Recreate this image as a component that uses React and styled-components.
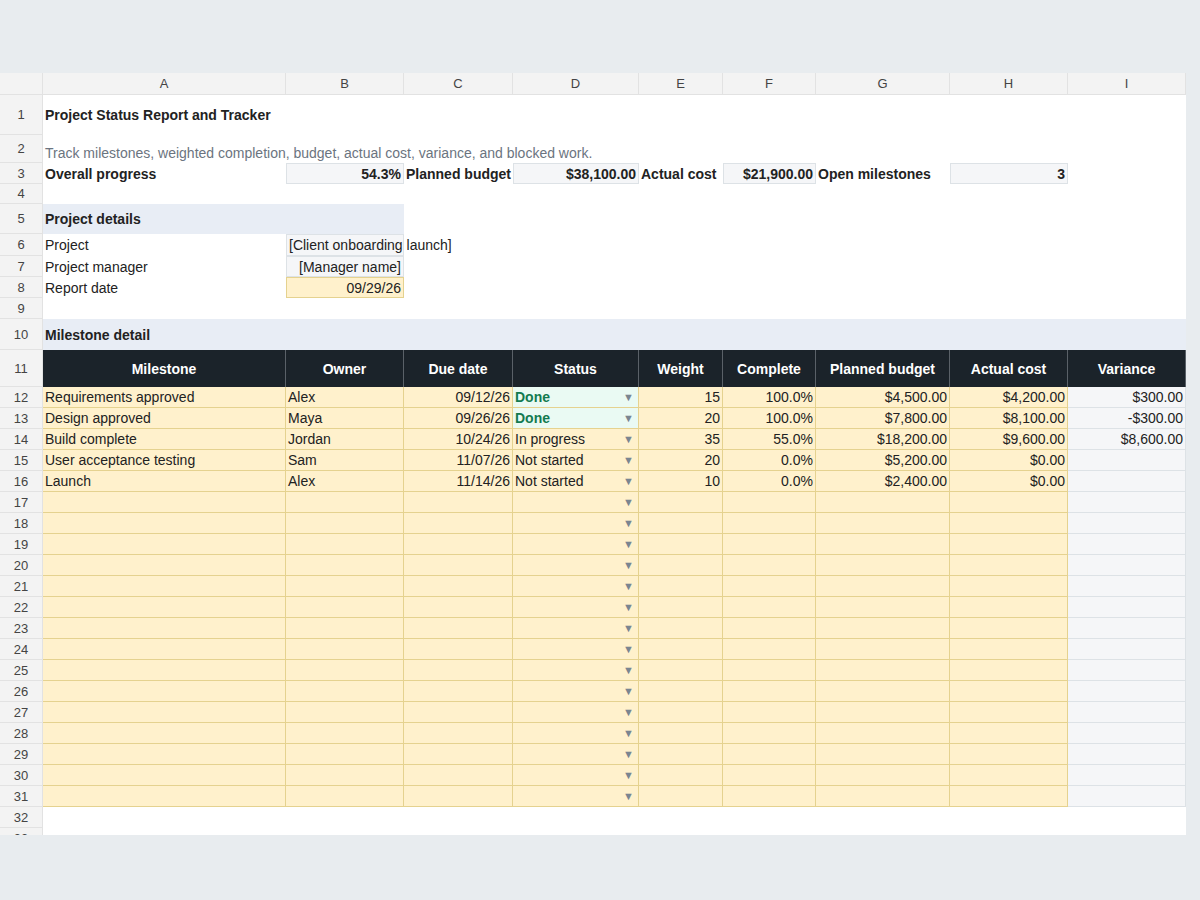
import React from "react";
import styled, { createGlobalStyle, css } from "styled-components";

const Global = createGlobalStyle`
  body { margin: 0; background: #e8ecef; font-family: "Liberation Sans", Arial, sans-serif; }
`;

const COLS = "43px 243px 118px 109px 126px 84px 93px 134px 118px 118px";

const Page = styled.div`
  width: 1200px;
  height: 900px;
  padding-top: 73px;
  box-sizing: border-box;
  overflow: hidden;
`;

const Sheet = styled.div`
  width: 1186px;
  height: 762px;
  background: #fff;
  overflow: hidden;
`;

const Row = styled.div`
  display: grid;
  grid-template-columns: ${COLS};
  height: ${(p) => p.h || 21}px;
  background: ${(p) => p.band || "transparent"};
`;

const Head = styled.div`
  background: #f3f3f3;
  color: #444;
  font-size: 13px;
  display: flex;
  align-items: center;
  justify-content: center;
  border-bottom: 1px solid #e2e2e2;
  border-right: 1px solid #e2e2e2;
`;

const RowNum = styled(Head)``;

const kinds = {
  plain: css``,
  input: css`
    background: #fff1cc;
    border-right: 1px solid #e5d28f;
    border-bottom: 1px solid #e5d28f;
  `,
  calc: css`
    background: #f5f6f8;
    border-right: 1px solid #dde2e6;
    border-bottom: 1px solid #dde2e6;
  `,
  boxed: css`
    background: #f5f6f8;
    border: 1px solid #dde2e6;
  `,
  boxedYellow: css`
    background: #fff1cc;
    border: 1px solid #e5d28f;
  `,
  done: css`
    background: #eafaf3;
    border-right: 1px solid #e5d28f;
    border-bottom: 1px solid #e5d28f;
    color: #137a50;
    font-weight: bold;
  `,
  header: css`
    background: #1b232a;
    color: #fff;
    font-weight: bold;
    justify-content: center;
    border-right: 1px solid #5a6168;
  `,
};

const Cell = styled.div`
  position: relative;
  display: flex;
  align-items: ${(p) => p.valign || "center"};
  justify-content: ${(p) => (p.right ? "flex-end" : "flex-start")};
  padding: 0 2px;
  font-size: 14px;
  color: #222;
  white-space: nowrap;
  overflow: visible;
  font-weight: ${(p) => (p.bold ? "bold" : "normal")};
  box-sizing: border-box;
  min-width: 0;
  z-index: ${(p) => (p.over ? 2 : 1)};
  grid-column: span ${(p) => p.span || 1};
  ${(p) => kinds[p.kind || "plain"]}
`;

const Sub = styled.span`
  color: #6b7480;
  padding-bottom: 2px;
`;

const Arrow = styled.span`
  position: absolute;
  right: 4px;
  top: 50%;
  transform: translateY(-50%);
  font-size: 11px;
  color: #7b8590;
  font-weight: normal;
`;

const letters = ["A", "B", "C", "D", "E", "F", "G", "H", "I"];

const milestones = [
  ["Requirements approved", "Alex", "09/12/26", "Done", "15", "100.0%", "$4,500.00", "$4,200.00", "$300.00"],
  ["Design approved", "Maya", "09/26/26", "Done", "20", "100.0%", "$7,800.00", "$8,100.00", "-$300.00"],
  ["Build complete", "Jordan", "10/24/26", "In progress", "35", "55.0%", "$18,200.00", "$9,600.00", "$8,600.00"],
  ["User acceptance testing", "Sam", "11/07/26", "Not started", "20", "0.0%", "$5,200.00", "$0.00", ""],
  ["Launch", "Alex", "11/14/26", "Not started", "10", "0.0%", "$2,400.00", "$0.00", ""],
];

const headers = ["Milestone", "Owner", "Due date", "Status", "Weight", "Complete", "Planned budget", "Actual cost", "Variance"];

function Empty({ n }) {
  return Array.from({ length: n }, (_, i) => <Cell key={i} />);
}

function DataRow({ num, data }) {
  const d = data || Array(9).fill("");
  return (
    <Row>
      <RowNum>{num}</RowNum>
      <Cell kind="input">{d[0]}</Cell>
      <Cell kind="input">{d[1]}</Cell>
      <Cell kind="input" right>{d[2]}</Cell>
      <Cell kind={d[3] === "Done" ? "done" : "input"}>
        {d[3]}
        <Arrow>▼</Arrow>
      </Cell>
      <Cell kind="input" right>{d[4]}</Cell>
      <Cell kind="input" right>{d[5]}</Cell>
      <Cell kind="input" right>{d[6]}</Cell>
      <Cell kind="input" right>{d[7]}</Cell>
      <Cell kind="calc" right>{d[8]}</Cell>
    </Row>
  );
}

export default function App() {
  const blanks = Array.from({ length: 15 }, (_, i) => i + 17);
  return (
    <Page>
      <Global />
      <Sheet>
        <Row h={22}>
          <Head />
          {letters.map((l) => (
            <Head key={l}>{l}</Head>
          ))}
        </Row>
        <Row h={40}>
          <RowNum>1</RowNum>
          <Cell bold over>Project Status Report and Tracker</Cell>
          <Empty n={8} />
        </Row>
        <Row h={28}>
          <RowNum>2</RowNum>
          <Cell valign="flex-end" over><Sub>Track milestones, weighted completion, budget, actual cost, variance, and blocked work.</Sub></Cell>
          <Empty n={8} />
        </Row>
        <Row>
          <RowNum>3</RowNum>
          <Cell bold>Overall progress</Cell>
          <Cell kind="boxed" bold right>54.3%</Cell>
          <Cell bold>Planned budget</Cell>
          <Cell kind="boxed" bold right>$38,100.00</Cell>
          <Cell bold>Actual cost</Cell>
          <Cell kind="boxed" bold right>$21,900.00</Cell>
          <Cell bold over>Open milestones</Cell>
          <Cell kind="boxed" bold right>3</Cell>
          <Cell />
        </Row>
        <Row h={20}>
          <RowNum>4</RowNum>
          <Empty n={9} />
        </Row>
        <Row h={30}>
          <RowNum>5</RowNum>
          <Cell bold span={2} style={{ background: "#e8edf5" }}>Project details</Cell>
          <Empty n={7} />
        </Row>
        <Row h={22}>
          <RowNum>6</RowNum>
          <Cell>Project</Cell>
          <Cell kind="boxed" over>[Client onboarding launch]</Cell>
          <Empty n={7} />
        </Row>
        <Row>
          <RowNum>7</RowNum>
          <Cell>Project manager</Cell>
          <Cell kind="boxed" right>[Manager name]</Cell>
          <Empty n={7} />
        </Row>
        <Row>
          <RowNum>8</RowNum>
          <Cell>Report date</Cell>
          <Cell kind="boxedYellow" right>09/29/26</Cell>
          <Empty n={7} />
        </Row>
        <Row>
          <RowNum>9</RowNum>
          <Empty n={9} />
        </Row>
        <Row h={31} band="#e8edf5">
          <RowNum>10</RowNum>
          <Cell bold>Milestone detail</Cell>
          <Empty n={8} />
        </Row>
        <Row h={37}>
          <RowNum>11</RowNum>
          {headers.map((h) => (
            <Cell key={h} kind="header">{h}</Cell>
          ))}
        </Row>
        {milestones.map((m, i) => (
          <DataRow key={i} num={12 + i} data={m} />
        ))}
        {blanks.map((n) => (
          <DataRow key={n} num={n} />
        ))}
        <Row>
          <RowNum>32</RowNum>
          <Empty n={9} />
        </Row>
        <Row>
          <RowNum>33</RowNum>
          <Empty n={9} />
        </Row>
      </Sheet>
    </Page>
  );
}
